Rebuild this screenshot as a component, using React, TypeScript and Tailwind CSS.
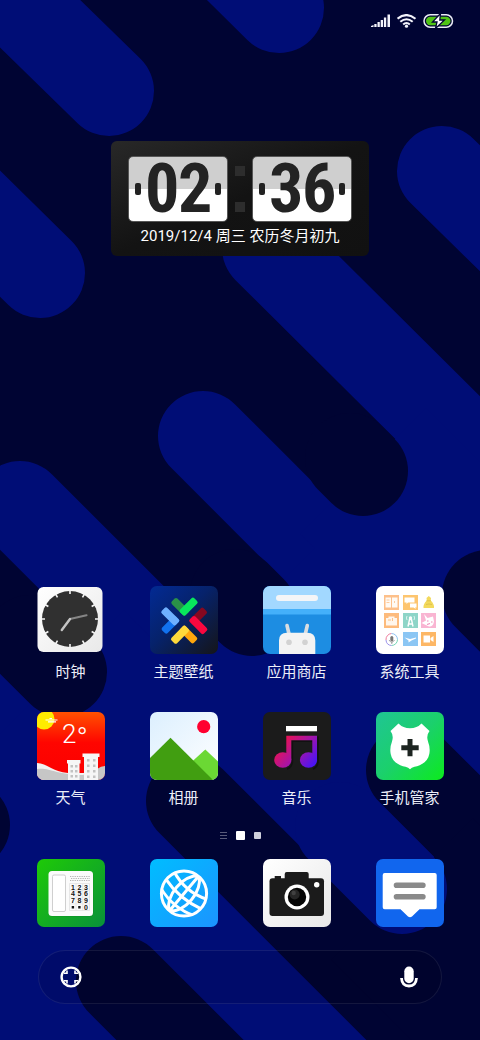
import type { ReactNode } from 'react';

type AppItem = {
  name: string;
  icon: ReactNode;
};

const Wallpaper = () => (
  <svg
    className="absolute inset-0 h-full w-full"
    viewBox="0 0 480 1040"
    preserveAspectRatio="xMidYMin slice"
    aria-hidden="true"
  >
    <rect width="480" height="1040" fill="#000433" />
    <g stroke="#000d76" strokeWidth="90" strokeLinecap="round">
      <path d="M-20-35 109 91" />
      <path d="M180-90 279 8" />
      <path d="M-90 145 40 273" />
      <path d="M442 171 600 326" />
      <path d="M267 248 600 579" />
      <path d="M203 436 400 633" />
      <path d="M20 506 250 736" />
      <path d="M-80 655 30 765" />
    </g>
    <path d="M426 408 300 534 315 548 188 675 124 610-1 735V1100H600V582Z" fill="#000d76" />
    <g stroke="#000433" strokeWidth="90" strokeLinecap="round">
      <path d="M350 458 363 471" />
      <path d="M235 594 252 611" />
      <path d="M30 640 62 672" />
      <path d="M-100 760-35 825" />
      <path d="M487 595 600 708" />
      <path d="M411 770 700 1059" />
      <path d="M191 801 500 1110" />
      <path d="M121 981 300 1160" />
    </g>
    <path d="M402 889 700 1187" stroke="#000433" strokeWidth="200" />
    <path d="M340 827 402 889" stroke="#000d76" strokeWidth="90" strokeLinecap="round" />
  </svg>
);

const StatusBar = () => (
  <header className="flex items-center justify-end gap-1.5 px-[26px] pt-3.5">
    <svg width="20" height="14" viewBox="0 0 20 14" fill="#f3f4fb" aria-label="信号">
      <path d="M0 13v-1l2.500-1v2zM3.300 10h2.300v3H3.300zM6.500 8h2.300v5H6.500zM9.700 6h2.300v7H9.700zM12.900 3.500h2.300v9.500h-2.300zM16.500 0.500h2.500V13h-2.500z" />
    </svg>
    <svg width="20" height="14" viewBox="0 0 20 14" fill="none" stroke="#f3f4fb" strokeWidth="2.100" aria-label="无线网络">
      <path d="M0.500 4.700Q9.500-2.600 18.500 4.700M3.300 7.800Q9.500 2.700 15.700 7.800M6.200 10.500Q9.500 7.500 12.800 10.500" />
      <circle cx="9.500" cy="12.200" r="1.600" fill="#f3f4fb" stroke="none" />
    </svg>
    <svg width="31" height="14" viewBox="0 0 31 14" aria-label="正在充电">
      <rect x="1" y="0.800" width="28.500" height="12.400" rx="6.200" fill="none" stroke="#e9ecf5" strokeWidth="1.500" />
      <rect x="3" y="2.800" width="24.500" height="8.400" rx="4.200" fill="#4fc414" />
      <path d="M17.500-0.500 9.500 8h4.500l-1.500 6.500L21.500 6H16.800Z" fill="#fff" stroke="#000433" strokeWidth="1.300" />
    </svg>
  </header>
);

const FlipCard = ({ value }: { value: string }) => (
  <div className="relative flex h-[66px] w-[100px] items-center justify-between rounded-[5px] border border-[#555] bg-linear-to-b from-[#cfcfcf] from-50% to-white to-50% px-1.5">
    <span className="h-3 w-1.5 rounded-xs bg-[#222]" />
    <span className="flex font-['Liberation_Sans_Narrow','Roboto_Condensed','Liberation_Sans',sans-serif] text-[68px] leading-[64px] font-bold text-[#232323]">
      {value.split('').map((digit, i) => (
        <span key={i} className="w-[33px] text-center">{digit}</span>
      ))}
    </span>
    <span className="h-3 w-1.5 rounded-xs bg-[#222]" />
  </div>
);

const ClockWidget = () => (
  <section className="mx-auto mt-[113px] w-[258px] rounded-md bg-linear-to-br from-[#282828] via-[#131313] to-[#111] px-[17px] pt-[15px] pb-[9px]">
    <div className="flex items-center justify-between">
      <FlipCard value="02" />
      <div className="flex flex-col gap-[26px]">
        <span className="size-2.5 bg-[#2d2d2d]" />
        <span className="size-2.5 bg-[#2d2d2d]" />
      </div>
      <FlipCard value="36" />
    </div>
    <p className="mt-[3px] text-center font-[Roboto,'Noto_Sans_CJK_SC',sans-serif] text-[15px] leading-[22px] whitespace-nowrap text-white">
      2019/12/4 周三 农历冬月初九
    </p>
  </section>
);

const Icon = ({ children }: { children: ReactNode }) => (
  <svg className="size-[68px] rounded-[7px]" viewBox="0 0 68 68" fill="none" aria-hidden="true">
    {children}
  </svg>
);

const ticks = [0, 30, 60, 90, 120, 150, 180, 210, 240, 270, 300, 330];

const ClockIcon = () => (
  <Icon>
    <defs>
      <linearGradient id="clockBg" x1="0" y1="0" x2="1" y2="1">
        <stop stopColor="#fff" />
        <stop offset="1" stopColor="#e9e9e9" />
      </linearGradient>
    </defs>
    <rect x="0.500" y="1" width="65" height="65" rx="6" fill="url(#clockBg)" />
    <circle cx="33" cy="33" r="28" fill="#303030" />
    {ticks.map((a) => (
      <path key={a} d="M33 4.500V8" stroke="#f6f6f6" strokeWidth="1.600" transform={`rotate(${a} 33 33)`} />
    ))}
    <path d="M33 33 49.500 29.300" stroke="#858585" strokeWidth="2.200" strokeLinecap="round" />
    <path d="M33 33 24.800 44" stroke="#c4c4c4" strokeWidth="2.400" strokeLinecap="round" />
  </Icon>
);

const chevrons = [
  { angle: 0, front: '#08e75c', back: '#2a9148' },
  { angle: 90, front: '#f9083f', back: '#850820' },
  { angle: 180, front: '#ffd93b', back: '#ffa60d' },
  { angle: 270, front: '#6fb0ff', back: '#1272ee' },
];

const ThemeIcon = () => (
  <Icon>
    <defs>
      <linearGradient id="themeBg" x1="0" y1="0" x2="1" y2="1">
        <stop stopColor="#022a94" />
        <stop offset="0.450" stopColor="#06226b" />
        <stop offset="1" stopColor="#151519" />
      </linearGradient>
    </defs>
    <rect width="68" height="68" fill="url(#themeBg)" />
    {chevrons.map((c) => (
      <g key={c.angle} transform={`rotate(${c.angle} 34.300 34.700) translate(34.300 30.500)`}>
        <rect width="19.500" height="7.800" rx="2" fill={c.back} transform="rotate(-135)" />
        <rect y="-7.800" width="20" height="7.800" rx="2" fill={c.front} transform="rotate(-45)" />
      </g>
    ))}
  </Icon>
);

const StoreIcon = () => (
  <Icon>
    <rect width="68" height="68" fill="#1d8de2" />
    <rect width="68" height="23" fill="#a2d8ff" />
    <rect y="23" width="68" height="5.500" fill="#44b0fa" />
    <rect x="13" y="9" width="42" height="6" rx="3" fill="#f4f5f7" />
    <path d="M24 39.500 26 48M44.300 39.500 42.300 48" stroke="#d9dde1" strokeWidth="3.600" strokeLinecap="round" />
    <path d="M16 68V54.500Q16 46.700 24 46.700H44.300Q52.300 46.700 52.300 54.500V68Z" fill="#f3f3f3" />
    <circle cx="26" cy="56.300" r="2.800" fill="#d2d2d2" />
    <circle cx="42" cy="56.300" r="2.800" fill="#d2d2d2" />
  </Icon>
);

const ToolsIcon = () => (
  <Icon>
    <rect width="68" height="68" fill="#fff" />
    <rect x="8" y="9" width="15" height="15" fill="#fdc08a" />
    <path d="M9.500 11.500h5.500v10H9.500zM16 11.500h5.500v10H16z" fill="#fffaf4" />
    <path d="M10.500 14h3M10.500 16.500h3M18.500 15v2" stroke="#fdc08a" strokeWidth="0.800" />
    <rect x="27" y="9" width="15" height="15" fill="#fdc56f" />
    <path d="M28.500 11.500h10v5h-6.500l-1.500 1.500v-1.500h-2zM34 17.500h6.500v4H39l1 1.500-2.500-1.500H34z" fill="#fff" />
    <path d="M50.500 12 52.800 10 55 12 54.700 14.500Q58.500 18 58 22H47.500Q47 18 50.800 14.500Z" fill="#f3d95c" />
    <path d="M50.500 14.800H55M50 18.500Q53 17.500 56 18.500" stroke="#dcc04c" strokeWidth="0.900" />
    <rect x="8" y="27" width="15" height="15" fill="#fdbb7c" />
    <path d="M10 32h11v7.500H10zM12.500 30.500h6V32h-6z" fill="#fff6ec" />
    <path d="M12 34h3M16.500 32v3" stroke="#fdbb7c" strokeWidth="0.900" />
    <rect x="27" y="27" width="15" height="15" fill="#8ed5c8" />
    <path d="M32 40.500 33.500 33.500H35.500L37 40.500M32.500 38H36.500" stroke="#fff" strokeWidth="1.400" />
    <path d="M31 30Q29.800 32 31 34M38 30Q39.200 32 38 34" stroke="#e6f6f3" strokeWidth="0.900" />
    <circle cx="34.500" cy="32" r="1.700" fill="#fff" />
    <rect x="45" y="27" width="15" height="15" fill="#f9b5d2" />
    <path d="M48 28 51.500 32 57 30.500 58 35.500Q57 41 53 40.500L45.500 37 50 34.500Z" fill="#fff" />
    <path d="M51 35h1.500M55 36h1.500M51 38.500l3-1" stroke="#ee8db8" strokeWidth="1.200" />
    <path d="M10 54A6 6 0 0 1 15.500 47.500" stroke="#ef7b9c" strokeWidth="1" />
    <path d="M15.500 47.500A6 6 0 0 1 21.500 53.500" stroke="#8fc3f3" strokeWidth="1" />
    <path d="M21.500 53.500A6 6 0 0 1 15.500 59.500" stroke="#74d4b4" strokeWidth="1" />
    <path d="M15.500 59.500A6 6 0 0 1 10 54" stroke="#9b92e8" strokeWidth="1" />
    <rect x="14.300" y="50" width="3" height="5.500" rx="1.500" fill="#777" />
    <path d="M13 54Q15.800 58.500 18.500 54M15.800 56v2" stroke="#999" strokeWidth="0.900" />
    <rect x="27" y="46" width="15" height="14" fill="#8bc6f4" />
    <path d="M28.500 51.500 34 53 40 51.500V52.500L35.500 54.500 32.500 56.500 32.500 54.500Z" fill="#fff" />
    <rect x="45" y="46" width="15" height="14" fill="#fdb765" />
    <path d="M47.500 49.500h6.500v7h-6.500zM54.500 52l3-2v6l-3-2z" fill="#fff" />
  </Icon>
);

const WeatherIcon = () => (
  <Icon>
    <defs>
      <linearGradient id="weatherBg" x1="0" y1="0" x2="0" y2="1">
        <stop stopColor="#ff5200" />
        <stop offset="0.450" stopColor="#ff0500" />
        <stop offset="1" stopColor="#fb0000" />
      </linearGradient>
    </defs>
    <rect width="68" height="68" fill="url(#weatherBg)" />
    <circle cx="7" cy="7" r="10.500" fill="#ffec00" />
    <path d="M8.500 8h12M11 9.800h8M12.500 6.500h2.500" stroke="#fff" strokeWidth="1.200" />
    <text x="25" y="31" fill="#fff" fontFamily="Roboto, 'Open Sans', sans-serif" fontWeight="300" fontSize="26">
      2<tspan fontSize="30" dy="5">°</tspan>
    </text>
    <path d="M0 51C10 51 16 60 31 61H46L61 60V68H0Z" fill="#f1f1f1" />
    <path d="M0 57C12 55 20 63 46 63L60 57Q64 54 68 54V68H0Z" fill="#c6c6c6" />
    <path d="M31 50h11.500v18H31zM30 48h13.500v3.500H30zM47 44h14v24H47zM45.500 41.500h17V45h-17z" fill="#f6f6f6" />
    <g fill="#c2c2c2">
      {[53, 58, 63].map((y) => (
        <path key={y} d={`M33.500 ${y}h2.500v2.500h-2.500zM38 ${y}h2.500v2.500H38z`} />
      ))}
      {[47, 52.500, 58, 63.500].map((y) => (
        <path key={y} d={`M50 ${y}h2.500v2.500H50zM56 ${y}h2.500v2.500H56z`} />
      ))}
    </g>
  </Icon>
);

const GalleryIcon = () => (
  <Icon>
    <defs>
      <linearGradient id="galleryBg" x1="0" y1="0" x2="1" y2="1">
        <stop stopColor="#dceffe" />
        <stop offset="1" stopColor="#fff" />
      </linearGradient>
    </defs>
    <rect width="68" height="68" fill="url(#galleryBg)" />
    <circle cx="53.700" cy="14.700" r="6.600" fill="#ff0030" />
    <path d="M35 56 55.300 37.500 68 49.500V68H50Z" fill="#6bd834" />
    <path d="M0 46 20.500 25.700 63 68H0Z" fill="#419e11" />
  </Icon>
);

const MusicIcon = () => (
  <Icon>
    <defs>
      <linearGradient id="musicNote" gradientUnits="userSpaceOnUse" x1="16" y1="26" x2="52" y2="56">
        <stop stopColor="#f8123f" />
        <stop offset="0.500" stopColor="#a814a5" />
        <stop offset="1" stopColor="#3d14ff" />
      </linearGradient>
    </defs>
    <rect width="68" height="68" fill="#1b1b1b" />
    <path d="M24 57Q28 56 29.300 51V29.300h20M50 57Q55 55 55 49V24.500" stroke="#111" strokeWidth="1.500" />
    <rect x="23" y="14" width="31" height="5.300" fill="#fff" />
    <path d="M23.300 23.700H54V48H49.300V28.300H28.300V48H23.300Z" fill="url(#musicNote)" />
    <ellipse cx="19.800" cy="48" rx="8.600" ry="7.700" fill="url(#musicNote)" />
    <ellipse cx="45.500" cy="48" rx="8.600" ry="7.700" fill="url(#musicNote)" />
  </Icon>
);

const SecurityIcon = () => (
  <Icon>
    <defs>
      <linearGradient id="securityBg" x1="0" y1="0" x2="1" y2="1">
        <stop stopColor="#20c594" />
        <stop offset="0.500" stopColor="#1bd06c" />
        <stop offset="1" stopColor="#0ceb1d" />
      </linearGradient>
    </defs>
    <rect width="68" height="68" fill="url(#securityBg)" />
    <path
      d="M22.500 11.500Q27 16.300 34 16.300T45.500 11.500L53.500 19Q50 23.500 52 29.500Q54.500 36 53.300 42C52 50 44 54 38.500 54.700Q35.500 55.500 34 57.300Q32.500 55.500 29.500 54.700C24 54 16 50 14.700 42Q13.500 36 16 29.500Q18 23.500 14.500 19Z"
      fill="#fff"
    />
    <path d="M34 27V44.300M25.300 35.700H42.700" stroke="#1c2420" strokeWidth="5" />
  </Icon>
);

const keypad = ['123', '456', '789'];

const PhoneIcon = () => (
  <Icon>
    <defs>
      <linearGradient id="phoneBg" x1="0" y1="0" x2="1" y2="1">
        <stop stopColor="#1eca07" />
        <stop offset="1" stopColor="#09913a" />
      </linearGradient>
    </defs>
    <rect width="68" height="68" fill="url(#phoneBg)" />
    <rect x="12" y="12.500" width="44.500" height="45" rx="3.500" fill="#0a6d1c" opacity="0.300" />
    <rect x="11.500" y="12" width="44.500" height="45" rx="3.500" fill="#fbfbfb" />
    <rect x="15.500" y="16" width="13" height="36.500" rx="1.500" fill="#fff" stroke="#cfcfcf" strokeWidth="1" />
    <path d="M33 17.500H53M34 19.500H53M33 21.500H53" stroke="#b5b5b5" strokeWidth="1" strokeDasharray="1.300 1" />
    <path d="M32.500 24.500h20M32.500 31.300h20M32.500 38.100h20M32.500 44.900h20M32.500 51.500h20M32.500 24.500v27M39 24.500v27M45.700 24.500v27M52.500 24.500v27" stroke="#e0e0e0" strokeWidth="0.700" />
    <g fill="#111" fontFamily="'Liberation Sans', sans-serif" fontWeight="700" fontSize="7" textAnchor="middle">
      {keypad.map((row, r) =>
        row.split('').map((key, c) => (
          <text key={key} x={36 + c * 6.500} y={30.500 + r * 6.800}>{key}</text>
        ))
      )}
      <text x="49" y="50.800">0</text>
    </g>
    <path d="M34.700 47h2.400v2.400h-2.400zM41.200 47h2.400v2.400h-2.400z" fill="#111" />
  </Icon>
);

const BrowserIcon = () => (
  <Icon>
    <defs>
      <linearGradient id="browserBg" x1="0" y1="0" x2="1" y2="1">
        <stop stopColor="#00bdff" />
        <stop offset="1" stopColor="#1c94ff" />
      </linearGradient>
      <clipPath id="globe">
        <circle cx="34" cy="34.500" r="23" />
      </clipPath>
    </defs>
    <rect width="68" height="68" fill="url(#browserBg)" />
    <circle cx="34" cy="34.500" r="22.600" stroke="#fff" strokeWidth="3" />
    <g stroke="#fff" strokeWidth="3" clipPath="url(#globe)">
      <g transform="rotate(40 34 34.500)">
        <path d="M34 11C21 22 21 47 34 58M34 11C47 22 47 47 34 58M34 11V58" />
        <path d="M12 24Q34 33 56 24M10 35Q34 42 58 35M12 45Q34 53 56 45" />
      </g>
    </g>
  </Icon>
);

const CameraIcon = () => (
  <Icon>
    <defs>
      <linearGradient id="cameraBg" x1="0" y1="0" x2="1" y2="1">
        <stop stopColor="#fff" />
        <stop offset="1" stopColor="#e8e8e8" />
      </linearGradient>
    </defs>
    <rect width="68" height="68" fill="url(#cameraBg)" />
    <rect x="6.500" y="19.300" width="54.500" height="37.700" rx="3" fill="#1b1b1b" />
    <path d="M21.700 20V15Q21.700 13 23.700 13H43.700Q45.700 13 45.700 15V20ZM11.700 20V17H18V20Z" fill="#1b1b1b" />
    <circle cx="34" cy="38" r="12.500" fill="#fff" />
    <circle cx="34" cy="38" r="9.200" fill="#050505" />
    <circle cx="31.700" cy="35.500" r="5" fill="#262626" />
    <circle cx="30.700" cy="34" r="2.200" fill="#414141" />
    <circle cx="53.700" cy="25.700" r="2.700" fill="#fff" />
  </Icon>
);

const MessageIcon = () => (
  <Icon>
    <rect width="68" height="68" fill="#1166ee" />
    <path d="M8.700 14H58.700Q60.700 14 60.700 16V48.300Q60.700 50.300 58.700 50.300H43.500L36 57.500Q34 59 32 57.500L24.500 50.300H8.700Q6.700 50.300 6.700 48.300V16Q6.700 14 8.700 14Z" fill="#fff" />
    <path d="M20.500 26.200H46.900M20.500 37.800H46.900" stroke="#8a8a8a" strokeWidth="5.600" strokeLinecap="round" />
  </Icon>
);

const apps: AppItem[] = [
  { name: '时钟', icon: <ClockIcon /> },
  { name: '主题壁纸', icon: <ThemeIcon /> },
  { name: '应用商店', icon: <StoreIcon /> },
  { name: '系统工具', icon: <ToolsIcon /> },
  { name: '天气', icon: <WeatherIcon /> },
  { name: '相册', icon: <GalleryIcon /> },
  { name: '音乐', icon: <MusicIcon /> },
  { name: '手机管家', icon: <SecurityIcon /> },
];

const dock: AppItem[] = [
  { name: '电话', icon: <PhoneIcon /> },
  { name: '浏览器', icon: <BrowserIcon /> },
  { name: '相机', icon: <CameraIcon /> },
  { name: '短信', icon: <MessageIcon /> },
];

const SearchBar = () => (
  <form className="mx-[38px] mt-[23px] flex h-[54px] items-center rounded-full border border-white/8 bg-black/10 px-[21px]">
    <button type="button" aria-label="扫一扫">
      <svg width="22" height="22" viewBox="0 0 22 22" fill="none" stroke="#fff">
        <circle cx="11" cy="11" r="9.400" strokeWidth="2.400" />
        <path d="M4 7.300H7V4.500M15 4.500V7.300H18M4 14.700H7V17.500M15 17.500V14.700H18" strokeWidth="1.600" />
      </svg>
    </button>
    <input type="search" aria-label="搜索" className="h-full min-w-0 flex-1 bg-transparent px-3 text-[15px] text-white outline-none" />
    <button type="button" aria-label="语音搜索">
      <svg width="22" height="22" viewBox="0 0 22 22" fill="none">
        <path d="M3.500 12Q4 20 11 20T18.500 12" stroke="#fff" strokeWidth="2.800" />
        <rect x="5.500" y="-0.500" width="11" height="18.500" rx="5.500" fill="#00052f" />
        <rect x="6.300" y="0.500" width="9.400" height="16.700" rx="4.700" fill="#fff" />
      </svg>
    </button>
  </form>
);

const App = () => {
  return (
    <div className="relative min-h-screen overflow-hidden bg-[#000433] font-['Noto_Sans_CJK_SC',sans-serif]">
      <Wallpaper />
      <div className="relative flex min-h-screen flex-col">
        <StatusBar />
        <ClockWidget />

        <main className="mt-auto grid grid-cols-4 gap-y-[31px] px-[14px]">
          {apps.map((app) => (
            <button key={app.name} className="flex flex-col items-center gap-[7px]">
              {app.icon}
              <span className="text-[15px] leading-5 text-[#eceef8]">{app.name}</span>
            </button>
          ))}
        </main>

        <div className="mt-[23px] flex h-2.5 items-center justify-center gap-[9px]">
          <span className="flex w-[7px] flex-col gap-0.5">
            <span className="h-px bg-white/35" />
            <span className="h-px bg-white/35" />
            <span className="h-px bg-white/35" />
          </span>
          <span className="size-[9px] rounded-[1px] bg-white" />
          <span className="size-[7px] rounded-[1px] bg-[#cfd0dc]" />
        </div>

        <nav className="mt-[19px] grid grid-cols-4 px-[14px]">
          {dock.map((app) => (
            <button key={app.name} aria-label={app.name} className="flex justify-center">
              {app.icon}
            </button>
          ))}
        </nav>

        <SearchBar />
        <div className="h-9" />
      </div>
    </div>
  );
};

export default App;
